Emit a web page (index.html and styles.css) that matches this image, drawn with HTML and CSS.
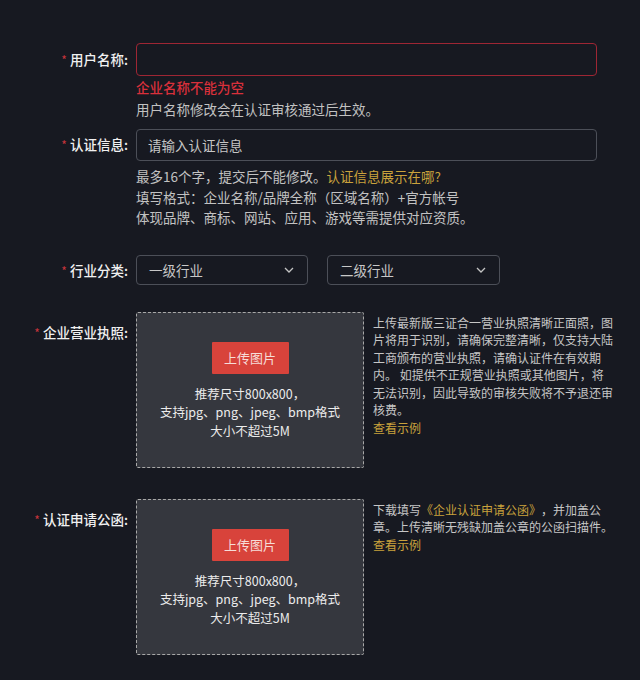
FILE: index.html
```html
<!DOCTYPE html>
<html lang="zh-CN">
<head>
<meta charset="utf-8">
<title>认证信息</title>
<link rel="stylesheet" href="styles.css">
</head>
<body>
<form class="form">
  <div class="row row-name">
    <label class="label"><span class="req">*</span>用户名称:</label>
    <div class="control">
      <input class="input input-error" type="text">
      <div class="err">企业名称不能为空</div>
      <div class="hint">用户名称修改会在认证审核通过后生效。</div>
    </div>
  </div>

  <div class="row row-info">
    <label class="label"><span class="req">*</span>认证信息:</label>
    <div class="control">
      <input class="input" type="text" placeholder="请输入认证信息">
      <div class="hints">
        <div><span>最多16个字，提交后不能修改。</span><a class="link">认证信息展示在哪?</a></div>
        <div>填写格式：企业名称/品牌全称（区域名称）+官方帐号</div>
        <div>体现品牌、商标、网站、应用、游戏等需提供对应资质。</div>
      </div>
    </div>
  </div>

  <div class="row row-cat">
    <label class="label"><span class="req">*</span>行业分类:</label>
    <div class="control selects">
      <div class="select"><span>一级行业</span><svg class="chev" width="10" height="6" viewBox="0 0 10 6"><path d="M1 1 L5 5 L9 1" fill="none" stroke="#c4c4c4" stroke-width="1.3"/></svg></div>
      <div class="select select-2"><span>二级行业</span><svg class="chev" width="10" height="6" viewBox="0 0 10 6"><path d="M1 1 L5 5 L9 1" fill="none" stroke="#c4c4c4" stroke-width="1.3"/></svg></div>
    </div>
  </div>

  <div class="row row-upload row-license">
    <label class="label label-top"><span class="req">*</span>企业营业执照:</label>
    <div class="control upload-wrap">
      <div class="upload">
        <button type="button" class="btn">上传图片</button>
        <div class="spec">推荐尺寸800x800，<br>支持jpg、png、jpeg、bmp格式<br>大小不超过5M</div>
      </div>
      <div class="desc"><p class="desc-text">上传最新版三证合一营业执照清晰正面照，图片将用于识别，请确保完整清晰，仅支持大陆工商颁布的营业执照，请确认证件在有效期内。 如提供不正规营业执照或其他图片，将无法识别，因此导致的审核失败将不予退还审核费。</p><a class="link block">查看示例</a></div>
    </div>
  </div>

  <div class="row row-upload row-letter">
    <label class="label label-top"><span class="req">*</span>认证申请公函:</label>
    <div class="control upload-wrap">
      <div class="upload">
        <button type="button" class="btn">上传图片</button>
        <div class="spec">推荐尺寸800x800，<br>支持jpg、png、jpeg、bmp格式<br>大小不超过5M</div>
      </div>
      <div class="desc">
        <div class="desc-line"><span>下载填写</span><a class="link">《企业认证申请公函》</a><span>，并加盖公</span></div>
        <div class="desc-line">章。上传清晰无残缺加盖公章的公函扫描件。</div>
        <a class="link block">查看示例</a>
      </div>
    </div>
  </div>
</form>
</body>
</html>
```

FILE: styles.css
```css
html, body {
  margin: 0;
  padding: 0;
  background: #171921;
}

body {
  font-family: "Noto Sans CJK SC", "Noto Sans", sans-serif;
  font-size: 13.5px;
  color: #c2c2c2;
  height: 680px;
  overflow: hidden;
  text-spacing-trim: space-all;
}

.form {
  padding-top: 43px;
}

.row {
  display: grid;
  grid-template-columns: 128px 1fr;
  column-gap: 8px;
}

.row-info { margin-top: 9px; }
.row-cat { margin-top: 27px; }
.row-license { margin-top: 27px; }
.row-letter { margin-top: 31px; }

.label {
  text-align: right;
  color: #f0f0f0;
  font-weight: 500;
  height: 33px;
  line-height: 33px;
  white-space: nowrap;
}

.row-info .label {
  height: 32px;
  line-height: 31px;
}

.row-cat .label {
  height: 30px;
  line-height: 30px;
}

.label-top {
  height: auto;
  line-height: 20px;
  padding-top: 10px;
}

.req {
  color: #c9343c;
  margin-right: 3px;
  font-size: 12px;
  font-weight: 400;
}

.control {
  min-width: 0;
}

.input {
  display: block;
  box-sizing: border-box;
  width: 461px;
  height: 32px;
  margin: 0;
  padding: 0 11px;
  border: 1px solid #4c4f58;
  border-radius: 4px;
  background: transparent;
  color: #d0d0d0;
  font-family: inherit;
  font-size: 13.5px;
  outline: none;
}

.input::placeholder {
  color: #c6c6c6;
}

.input-error {
  height: 33px;
  border-color: #9e2634;
}

.err {
  color: #d9303b;
  font-weight: 500;
  line-height: 22px;
}

.hint {
  line-height: 22px;
}

.hints {
  margin-top: 5px;
  line-height: 20.5px;
}

.link {
  color: #c9a23c;
  text-decoration: none;
}

.link.block {
  display: block;
}

.selects {
  display: flex;
  gap: 19px;
}

.select {
  box-sizing: border-box;
  width: 172px;
  height: 30px;
  padding: 0 12px;
  border: 1px solid #4c4f58;
  border-radius: 4px;
  display: flex;
  align-items: center;
  justify-content: space-between;
  color: #c8c8c8;
}

.select-2 {
  width: 173px;
}

.chev {
  display: block;
  margin-right: 1px;
}

.upload-wrap {
  display: flex;
  align-items: flex-start;
}

.upload {
  box-sizing: border-box;
  width: 228px;
  height: 156px;
  border: 1px dashed #a8a8a8;
  border-radius: 2px;
  background: #35373e;
  display: flex;
  flex-direction: column;
  align-items: center;
  padding-top: 29px;
}

.btn {
  width: 77px;
  height: 32px;
  border: none;
  border-radius: 1px;
  background: #d8433b;
  color: #f6dcd8;
  font-family: inherit;
  font-size: 13px;
  padding: 0;
}

.spec {
  margin-top: 11px;
  text-align: center;
  color: #ececec;
  font-size: 12.5px;
  line-height: 18.5px;
}

.desc {
  width: 240px;
  margin-left: 9px;
  padding-top: 2px;
  font-size: 12px;
  line-height: 17.6px;
  color: #c6c6c6;
}

.desc-text {
  margin: 0;
}

.desc-line {
  white-space: nowrap;
}
```
